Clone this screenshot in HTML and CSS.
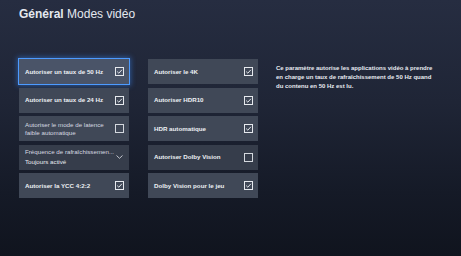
FILE: index.html
```html
<!DOCTYPE html>
<html lang="fr">
<head>
<meta charset="utf-8">
<link rel="stylesheet" href="styles.css">
</head>
<body>
<div class="screen">
  <header class="title"><b>Général</b> Modes vidéo</header>
  <main class="content">
    <div class="col">
      <div class="tile focused"><span class="label">Autoriser un taux de 50 Hz</span><svg class="box" viewBox="0 0 9 9"><rect x="0.5" y="0.5" width="8" height="8" fill="none" stroke="#e6e9ee"/><path d="M2.2 4.6 L3.8 6.2 L6.9 2.8" fill="none" stroke="#e6e9ee" stroke-width="1"/></svg></div>
      <div class="tile"><span class="label">Autoriser un taux de 24 Hz</span><svg class="box" viewBox="0 0 9 9"><rect x="0.5" y="0.5" width="8" height="8" fill="none" stroke="#e6e9ee"/><path d="M2.2 4.6 L3.8 6.2 L6.9 2.8" fill="none" stroke="#e6e9ee" stroke-width="1"/></svg></div>
      <div class="tile"><span class="label light">Autoriser le mode de latence<br>faible automatique</span><svg class="box" viewBox="0 0 9 9"><rect x="0.5" y="0.5" width="8" height="8" fill="none" stroke="#d4d8de"/></svg></div>
      <div class="tile dark"><span class="label light two">Fréquence de rafraîchissemen...<span class="sub">Toujours activé</span></span><svg class="chev" viewBox="0 0 7 4"><path d="M0.5 0.5 L3.5 3.3 L6.5 0.5" fill="none" stroke="#cfd3da" stroke-width="0.9"/></svg></div>
      <div class="tile"><span class="label">Autoriser la YCC 4:2:2</span><svg class="box" viewBox="0 0 9 9"><rect x="0.5" y="0.5" width="8" height="8" fill="none" stroke="#e6e9ee"/><path d="M2.2 4.6 L3.8 6.2 L6.9 2.8" fill="none" stroke="#e6e9ee" stroke-width="1"/></svg></div>
    </div>
    <div class="col">
      <div class="tile"><span class="label">Autoriser le 4K</span><svg class="box" viewBox="0 0 9 9"><rect x="0.5" y="0.5" width="8" height="8" fill="none" stroke="#e6e9ee"/><path d="M2.2 4.6 L3.8 6.2 L6.9 2.8" fill="none" stroke="#e6e9ee" stroke-width="1"/></svg></div>
      <div class="tile"><span class="label">Autoriser HDR10</span><svg class="box" viewBox="0 0 9 9"><rect x="0.5" y="0.5" width="8" height="8" fill="none" stroke="#e6e9ee"/><path d="M2.2 4.6 L3.8 6.2 L6.9 2.8" fill="none" stroke="#e6e9ee" stroke-width="1"/></svg></div>
      <div class="tile"><span class="label">HDR automatique</span><svg class="box" viewBox="0 0 9 9"><rect x="0.5" y="0.5" width="8" height="8" fill="none" stroke="#e6e9ee"/><path d="M2.2 4.6 L3.8 6.2 L6.9 2.8" fill="none" stroke="#e6e9ee" stroke-width="1"/></svg></div>
      <div class="tile dark"><span class="label">Autoriser Dolby Vision</span><svg class="box" viewBox="0 0 9 9"><rect x="0.5" y="0.5" width="8" height="8" fill="none" stroke="#d4d8de"/></svg></div>
      <div class="tile"><span class="label">Dolby Vision pour le jeu</span><svg class="box" viewBox="0 0 9 9"><rect x="0.5" y="0.5" width="8" height="8" fill="none" stroke="#e6e9ee"/><path d="M2.2 4.6 L3.8 6.2 L6.9 2.8" fill="none" stroke="#e6e9ee" stroke-width="1"/></svg></div>
    </div>
    <p class="desc">Ce paramètre autorise les applications vidéo à prendre en charge un taux de rafraîchissement de 50 Hz quand du contenu en 50 Hz est lu.</p>
  </main>
</div>
</body>
</html>
```
FILE: styles.css
```css
html, body {
  margin: 0;
  padding: 0;
}
body {
  width: 461px;
  height: 256px;
  overflow: hidden;
  font-family: "Liberation Sans", Arial, sans-serif;
  color: #e8ebf0;
}
.screen {
  width: 461px;
  height: 256px;
  box-sizing: border-box;
  padding: 7px 0 0 19px;
  background: linear-gradient(180deg, #262d41 0%, #1f2536 40%, #151a27 75%, #10141e 100%);
}
.title {
  font-size: 12px;
  line-height: 15px;
  color: #e4e8ef;
}
.title b {
  font-weight: bold;
}
.content {
  display: flex;
  align-items: flex-start;
  margin-top: 37px;
}
.col {
  width: 110px;
  display: flex;
  flex-direction: column;
  gap: 3.5px;
  margin-right: 19px;
}
.col + .col {
  margin-right: 18px;
}
.tile {
  height: 25px;
  box-sizing: border-box;
  background: #404857;
  display: flex;
  align-items: center;
  justify-content: space-between;
  padding: 0 5px 0 6px;
}
.tile.dark {
  background: #363d4b;
}
.tile.focused {
  background: #4a5468;
  outline: 1.5px solid #4d9bff;
  outline-offset: 0.5px;
  box-shadow: 0 0 5px 2px rgba(60, 140, 255, 0.45);
}
.label {
  font-size: 6.2px;
  font-weight: bold;
  line-height: 8px;
  white-space: nowrap;
  color: #edf0f4;
}
.label.light {
  font-weight: normal;
  color: #d6dae1;
}
.label.two {
  display: flex;
  flex-direction: column;
  gap: 2px;
}
.sub {
  color: #e8ebef;
}
.box {
  width: 9px;
  height: 9px;
  flex: none;
}
.chev {
  width: 7px;
  height: 4px;
  flex: none;
  margin-right: 1px;
}
.desc {
  margin: 5px 0 0 0;
  width: 158px;
  font-size: 6px;
  line-height: 9px;
  font-weight: bold;
  color: #e8ebf0;
}
```
